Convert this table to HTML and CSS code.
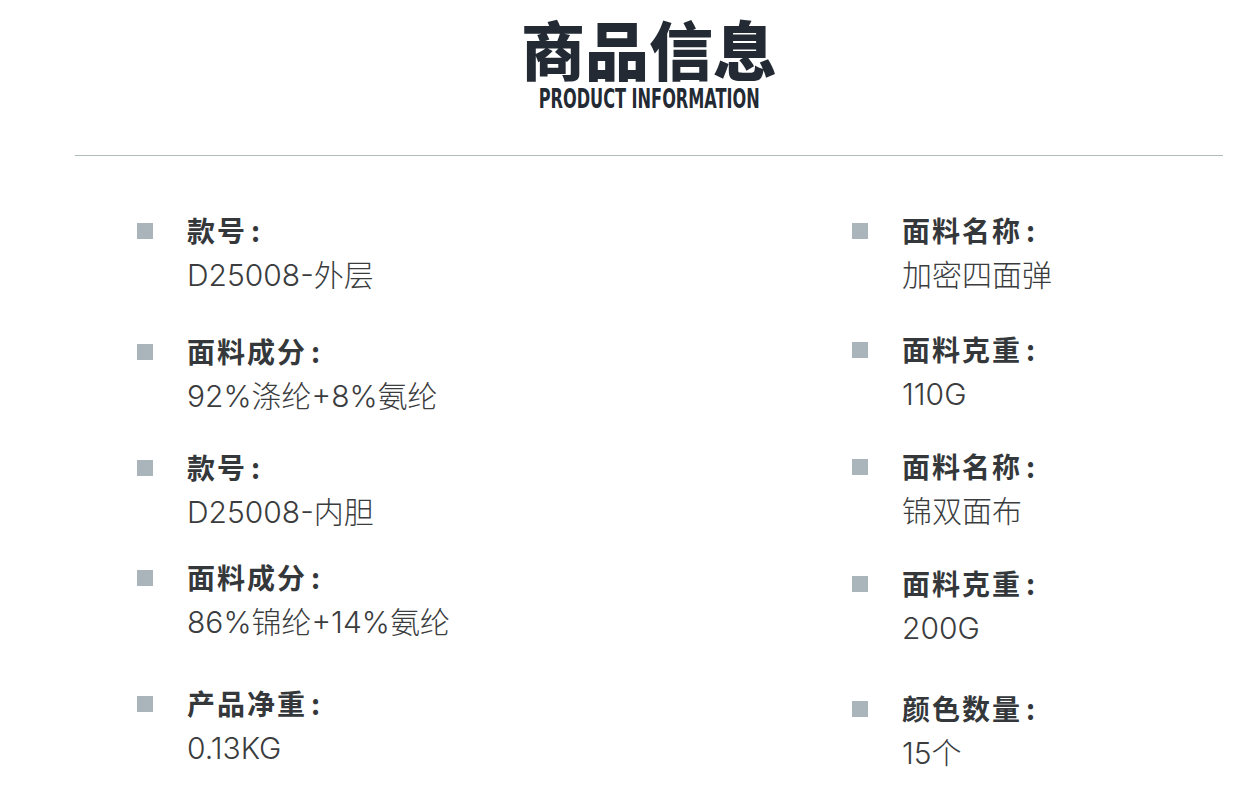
FILE: index.html
```html
<!DOCTYPE html>
<html lang="zh-CN">
<head>
<meta charset="utf-8">
<title>商品信息</title>
<link rel="stylesheet" href="styles.css">
</head>
<body>
<div class="page">
  <header class="header">
    <h1 class="title">商品信息</h1>
    <div class="subtitle"><span>PRODUCT INFORMATION</span></div>
  </header>
  <div class="divider"></div>
  <section class="specs">
    <div class="col col-left">
      <div class="item"><span class="bullet"></span><div class="text"><div class="label">款号<span class="colon">:</span></div><div class="value">D25008-外层</div></div></div>
      <div class="item"><span class="bullet"></span><div class="text"><div class="label">面料成分<span class="colon">:</span></div><div class="value">92%涤纶+8%氨纶</div></div></div>
      <div class="item"><span class="bullet"></span><div class="text"><div class="label">款号<span class="colon">:</span></div><div class="value">D25008-内胆</div></div></div>
      <div class="item"><span class="bullet"></span><div class="text"><div class="label">面料成分<span class="colon">:</span></div><div class="value">86%锦纶+14%氨纶</div></div></div>
      <div class="item"><span class="bullet"></span><div class="text"><div class="label">产品净重<span class="colon">:</span></div><div class="value">0.13KG</div></div></div>
    </div>
    <div class="col col-right">
      <div class="item"><span class="bullet"></span><div class="text"><div class="label">面料名称<span class="colon">:</span></div><div class="value">加密四面弹</div></div></div>
      <div class="item"><span class="bullet"></span><div class="text"><div class="label">面料克重<span class="colon">:</span></div><div class="value">110G</div></div></div>
      <div class="item"><span class="bullet"></span><div class="text"><div class="label">面料名称<span class="colon">:</span></div><div class="value">锦双面布</div></div></div>
      <div class="item"><span class="bullet"></span><div class="text"><div class="label">面料克重<span class="colon">:</span></div><div class="value">200G</div></div></div>
      <div class="item"><span class="bullet"></span><div class="text"><div class="label">颜色数量<span class="colon">:</span></div><div class="value">15个</div></div></div>
    </div>
  </section>
</div>
</body>
</html>
```

FILE: styles.css
```css
html, body {
  margin: 0;
  padding: 0;
  background: #ffffff;
}

body {
  font-family: "Noto Sans CJK SC", "Noto Sans", sans-serif;
  color: #3a3c3e;
}

.page {
  width: 1148px;
  margin-left: 75px;
}

.header {
  display: flex;
  flex-direction: column;
  align-items: center;
  padding-top: 12px;
}

.title {
  margin: 0;
  font-size: 64px;
  line-height: 70px;
  font-weight: 900;
  color: #232a33;
  letter-spacing: 0;
}

.subtitle {
  margin-top: 4px;
  height: 27px;
  display: flex;
  justify-content: center;
}

.subtitle span {
  display: inline-block;
  font-family: "Liberation Sans Narrow", "DejaVu Sans Condensed", "Liberation Sans", sans-serif;
  font-weight: 700;
  font-size: 26px;
  line-height: 27px;
  color: #232a33;
  transform: scaleX(0.69);
  white-space: nowrap;
}

.divider {
  margin-top: 42px;
  height: 1px;
  background: #aebcba;
}

.specs {
  display: grid;
  grid-template-columns: 715px 1fr;
  padding-left: 62px;
  margin-top: 52px;
}

.col {
  display: flex;
  flex-direction: column;
}

.item {
  display: flex;
  align-items: flex-start;
  gap: 34px;
  height: 90px;
}

.bullet {
  flex: none;
  width: 16px;
  height: 16px;
  margin-top: 15px;
  background: #a9b4bb;
}

.text {
  display: flex;
  flex-direction: column;
}

.label {
  font-size: 28px;
  line-height: 45px;
  font-weight: 700;
  letter-spacing: 2px;
  color: #35383b;
}

.colon {
  margin-left: 4px;
}

.value {
  font-family: "Inter", "Noto Sans CJK SC", sans-serif;
  font-size: 30px;
  line-height: 45px;
  font-weight: 300;
  font-variant-numeric: proportional-nums;
  color: #3a3c3e;
}

.col-left .item:nth-child(2) { margin-top: 31px; }
.col-left .item:nth-child(3) { margin-top: 26px; }
.col-left .item:nth-child(4) { margin-top: 20px; }
.col-left .item:nth-child(5) { margin-top: 36px; }

.col-right .item:nth-child(2) { margin-top: 29px; }
.col-right .item:nth-child(3) { margin-top: 27px; }
.col-right .item:nth-child(4) { margin-top: 27px; }
.col-right .item:nth-child(5) { margin-top: 35px; }
```
